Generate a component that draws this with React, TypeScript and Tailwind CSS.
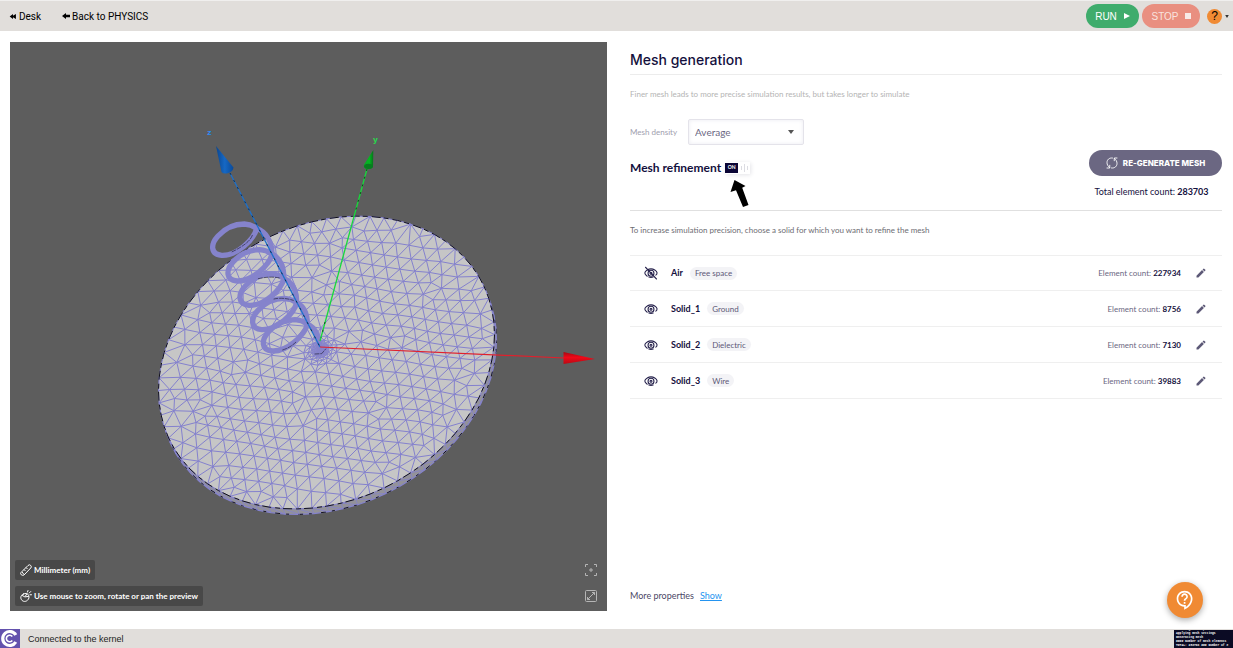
import React, { useState } from "react";
import { MdEdit, MdOutlineContactSupport } from "react-icons/md";

type Pt = [number, number];

/* ---------- mesh geometry ---------- */

function makeRandom(seed: number) {
  let s = seed;
  return () => {
    s = (s * 1664525 + 1013904223) % 4294967296;
    return s / 4294967296;
  };
}

const HUB: Pt = [-0.036, -0.09];
const RIM_COUNT = 72;
const HUB_RINGS: [number, number][] = [
  [0.01, 6], [0.022, 12], [0.036, 14], [0.052, 14], [0.072, 14], [0.1, 13],
];
const FIXED_COUNT = RIM_COUNT + HUB_RINGS.reduce((sum, [, n]) => sum + n, 0);

function diskPoints(): Pt[] {
  const rnd = makeRandom(11);
  const pts: Pt[] = [];
  for (let i = 0; i < RIM_COUNT; i++) {
    const a = (i / RIM_COUNT) * Math.PI * 2;
    pts.push([Math.cos(a), Math.sin(a)]);
  }
  HUB_RINGS.forEach(([r, n], k) => {
    for (let i = 0; i < n; i++) {
      const a = ((i + (k % 2) * 0.5 + rnd() * 0.3) / n) * Math.PI * 2;
      pts.push([HUB[0] + r * Math.cos(a), HUB[1] + r * Math.sin(a)]);
    }
  });
  const step = 0.088;
  const rowStep = step * 0.866;
  for (let j = -14; j <= 14; j++) {
    for (let i = -14; i <= 14; i++) {
      const gx = (i + (Math.abs(j) % 2) * 0.5) * step + (rnd() - 0.5) * 0.05;
      const gy = j * rowStep + (rnd() - 0.5) * 0.05;
      const x = gx * 0.94 - gy * 0.34;
      const y = gx * 0.34 + gy * 0.94;
      if (Math.hypot(x, y) > 0.945) continue;
      if (Math.hypot(x - HUB[0], y - HUB[1]) < 0.14) continue;
      pts.push([x, y]);
    }
  }
  return pts;
}

function triangulate(points: Pt[]): number[][] {
  const n = points.length;
  const all: Pt[] = [...points, [-30, -20], [30, -20], [0, 40]];
  type Tri = { v: number[]; cx: number; cy: number; r: number };
  const make = (a: number, b: number, c: number): Tri => {
    const [ax, ay] = all[a];
    const [bx, by] = all[b];
    const [cx, cy] = all[c];
    const d = 2 * (ax * (by - cy) + bx * (cy - ay) + cx * (ay - by)) || 1e-12;
    const a2 = ax * ax + ay * ay;
    const b2 = bx * bx + by * by;
    const c2 = cx * cx + cy * cy;
    const ux = (a2 * (by - cy) + b2 * (cy - ay) + c2 * (ay - by)) / d;
    const uy = (a2 * (cx - bx) + b2 * (ax - cx) + c2 * (bx - ax)) / d;
    return { v: [a, b, c], cx: ux, cy: uy, r: (ax - ux) ** 2 + (ay - uy) ** 2 };
  };
  let tris: Tri[] = [make(n, n + 1, n + 2)];
  for (let p = 0; p < n; p++) {
    const [x, y] = all[p];
    const edges = new Map<string, [number, number]>();
    const keep: Tri[] = [];
    for (const t of tris) {
      if ((x - t.cx) ** 2 + (y - t.cy) ** 2 < t.r - 1e-10) {
        for (let k = 0; k < 3; k++) {
          const a = t.v[k];
          const b = t.v[(k + 1) % 3];
          const key = a < b ? `${a}_${b}` : `${b}_${a}`;
          if (edges.has(key)) edges.delete(key);
          else edges.set(key, [a, b]);
        }
      } else keep.push(t);
    }
    edges.forEach(([a, b]) => keep.push(make(a, b, p)));
    tris = keep;
  }
  return tris.filter((t) => t.v.every((i) => i < n)).map((t) => t.v);
}

function neighbours(pts: Pt[]): Set<number>[] {
  const near: Set<number>[] = pts.map(() => new Set<number>());
  triangulate(pts).forEach(([a, b, c]) => {
    near[a].add(b).add(c);
    near[b].add(a).add(c);
    near[c].add(a).add(b);
  });
  return near;
}

const toView = ([x, y]: Pt): Pt => [326.5 + 168 * x, 362.5 - 28 * x + 143.7 * y];

function buildMesh(): string {
  let pts = diskPoints();
  for (let pass = 0; pass < 3; pass++) {
    const near = neighbours(pts);
    pts = pts.map((p, i): Pt => {
      if (i < FIXED_COUNT) return p;
      let sx = 0;
      let sy = 0;
      near[i].forEach((k) => {
        sx += pts[k][0];
        sy += pts[k][1];
      });
      const m = near[i].size || 1;
      return [p[0] * 0.5 + (sx / m) * 0.5, p[1] * 0.5 + (sy / m) * 0.5];
    });
  }
  let d = "";
  neighbours(pts).forEach((set, i) => {
    set.forEach((k) => {
      if (k > i) {
        const [x1, y1] = toView(pts[i]);
        const [x2, y2] = toView(pts[k]);
        d += `M${x1.toFixed(1)} ${y1.toFixed(1)}L${x2.toFixed(1)} ${y2.toFixed(1)}`;
      }
    });
  });
  return d;
}

const MESH = buildMesh();
const RIM = Array.from({ length: RIM_COUNT }, (_, i) => {
  const a = (i / RIM_COUNT) * Math.PI * 2;
  return toView([Math.cos(a), Math.sin(a)]);
});
const RIM_POINTS = RIM.map((p) => p.map((v) => v.toFixed(1)).join(",")).join(" ");
const LOWER_POINTS = RIM.map(([x, y]) => `${(x + 2).toFixed(1)},${(y + 5.5).toFixed(1)}`).join(" ");
const SIDE_EDGES = RIM.map(([x, y], i) => {
  const [nx, ny] = RIM[(i + 1) % RIM_COUNT];
  return `M${x} ${y}L${x + 2} ${y + 5.5}L${nx} ${ny}`;
}).join("");

const COILS: Pt[] = [[320, 325], [366, 402], [402, 475], [440, 548], [472, 612]];

function Scene() {
  return (
    <svg viewBox="10 42 597 569" className="block h-auto w-full" role="img" aria-label="3D mesh preview">
      <defs>
        <linearGradient id="blueCone" x1="0" x2="1"><stop offset="0" stopColor="#0b468f" /><stop offset=".5" stopColor="#1668c4" /><stop offset="1" stopColor="#0a4a99" /></linearGradient>
        <linearGradient id="greenCone" x1="0" x2="1"><stop offset="0" stopColor="#08ad27" /><stop offset=".6" stopColor="#05b521" /><stop offset="1" stopColor="#08721c" /></linearGradient>
        <linearGradient id="redCone" x1="0" x2="0" y1="0" y2="1"><stop offset="0" stopColor="#a50812" /><stop offset=".45" stopColor="#f00918" /><stop offset="1" stopColor="#b80a15" /></linearGradient>
      </defs>
      <polygon points={LOWER_POINTS} fill="#939299" stroke="#8583cc" strokeWidth="1.2" />
      <polygon points={LOWER_POINTS} fill="none" stroke="#16151c" strokeWidth="1" strokeDasharray="3 6 5 9" />
      <path d={SIDE_EDGES} stroke="#8583cc" strokeWidth=".8" fill="none" />
      <polygon points={RIM_POINTS} fill="#c6c6c6" />
      <path d={MESH} stroke="#8481ce" strokeWidth="1" fill="none" />
      <polygon points={RIM_POINTS} fill="none" stroke="#111116" strokeWidth="1" strokeDasharray="9 3 5 4" />
      <circle cx="320" cy="349" r="9" fill="#8583cc" opacity=".75" />
      <g transform="translate(150 120) scale(.33333)" fill="none" stroke="#8583cc" strokeLinejoin="round" strokeLinecap="round">
        {COILS.map(([x, y], i) => {
          const next = COILS[i + 1] ?? [508, 684];
          const dx = next[0] - x;
          const dy = next[1] - y;
          return (
            <path
              key={x}
              strokeWidth="16"
              d={`M${x} ${y}c-8 35 -61 83 -105 81c-34 -3 -34 -33 -11 -58c23 -25 54 -36 79 -36c20 1 37 13 37 13c${dx * 0.6} ${dy * 0.15} ${dx} ${dy * 0.5} ${dx} ${dy}`}
            />
          );
        })}
        <path d="M307 346q-8 24-62 50M325 476q35-8 65-2M372 537q25-6 58 4M398 690q24-8 40-24M495 702l20-1 12-14" stroke="#24233a" strokeWidth="2" strokeDasharray="12 5" />
      </g>
      <path d="M230 173L320 347" stroke="#1c70cc" strokeWidth="1.3" />
      <path d="M230 173L320 347" stroke="#0a1a30" strokeWidth=".8" strokeDasharray="2 6" />
      <path d="M367 169L320 341" stroke="#18d93c" strokeWidth="1.3" />
      <path d="M367 169L355 213M325 322L321 338" stroke="#0b2410" strokeWidth=".8" strokeDasharray="2 6" />
      <path d="M320 347L564 358" stroke="#e0202c" strokeWidth="1.2" />
      <path d="M216 146L233.5 167.500Q233 172 227 173.500Q223 174 221.500 172Z" fill="url(#blueCone)" />
      <path d="M373.300 150L373 167Q371 169.500 367 169.300Q363.500 168.500 363.800 165Z" fill="url(#greenCone)" />
      <ellipse cx="368.500" cy="166.300" rx="4.400" ry="2.600" fill="#087d1f" />
      <path d="M563.500 352L595 359L563.500 364Z" fill="url(#redCone)" />
      <text x="207" y="135" fill="#2b8cf5" fontSize="8" fontWeight="700" fontFamily="Liberation Mono, monospace">z</text>
      <text x="373" y="142" fill="#24e24b" fontSize="8" fontWeight="700" fontFamily="Liberation Mono, monospace">y</text>
    </svg>
  );
}

/* ---------- icons ---------- */

function Eye({ hidden = false }: { hidden?: boolean }) {
  return (
    <svg viewBox="-1 -1 26 26" className="size-3.5" fill="none" stroke="#27234d" strokeWidth="2" strokeLinecap="round">
      <path d="M5 18C-1 14-1 10 5 6.500c4-2.500 10-2.500 14 0c5 3 5.500 7 2 9.500M8 19.500q4 1.500 8 0" />
      <circle cx="12" cy="12.500" r="5.500" />
      <circle cx="12" cy="12.500" r="1.800" />
      {hidden && <path d="M2 1.500L22 23" strokeWidth="2.400" />}
    </svg>
  );
}

function SyncIcon() {
  return (
    <svg viewBox="0 0 24 24" className="size-3" fill="none" stroke="#fff" strokeWidth="1.800" strokeLinecap="round" strokeLinejoin="round">
      <path d="M13 2C6 1 2 6 2 11c0 4 1.500 7 5 10M2 22h5.500v-5.500M11 22c7 1 11-4 11-9c0-4-1.500-7-5-10M22 2h-5.500v5.500" />
    </svg>
  );
}

function RulerIcon() {
  return (
    <svg viewBox="0 0 24 24" className="size-3" fill="none" stroke="#fff" strokeWidth="2" strokeLinejoin="round">
      <path d="M2 17L16 3q3-3 5.500 0t0 5L8 22q-3 1.500-5.500-.5T2 17ZM8 11l3 3M12 7l3 3M4 16l4 5" />
    </svg>
  );
}

function MouseIcon() {
  return (
    <svg viewBox="0 0 24 24" className="size-3" fill="none" stroke="#fff" strokeWidth="2" strokeLinecap="round">
      <path d="M7 8C2 10 0 15 3 19.500s9 4 12 1s4-6 2-10S11 6 7 8ZM4 11q5 5 13 2M11 12l3-5M15 4l1-3M18.500 6l3-3M20 9.500h3" />
    </svg>
  );
}

/* ---------- page ---------- */

interface Solid {
  name: string;
  kind: string;
  count: number;
  hidden?: boolean;
}

const SOLIDS: Solid[] = [
  { name: "Air", kind: "Free space", count: 227934, hidden: true },
  { name: "Solid_1", kind: "Ground", count: 8756 },
  { name: "Solid_2", kind: "Dielectric", count: 7130 },
  { name: "Solid_3", kind: "Wire", count: 39883 },
];

function Header() {
  return (
    <header className="flex h-[31px] items-center border-t border-[#f0efee] bg-[#e1dedb] pr-1 pl-[9px] text-black">
      <a href="#desk" className="flex items-center gap-[2px] text-[10px] font-['Roboto',sans-serif]">
        <svg viewBox="0 0 8 6" className="h-[5px] w-2"><path d="M0 3L4 0V2L7.500 0V6L4 4V6Z" /></svg>
        Desk
      </a>
      <a href="#physics" className="ml-[21px] flex items-center gap-[2px] text-[10px] font-['Roboto',sans-serif]">
        <svg viewBox="0 0 8 6" className="h-1.5 w-2"><path d="M0 3L4 0V1.700H8V4.300H4V6Z" /></svg>
        Back to PHYSICS
      </a>
      <div className="ml-auto flex items-center font-['Liberation_Sans',sans-serif]">
        <button className="flex h-6 w-[53px] items-center justify-center gap-[7px] rounded-full bg-[#3fac6c] text-[10px] font-medium text-white">
          RUN
          <svg viewBox="0 0 6 6" className="size-1.5" fill="#fff"><path d="M0 0L6 3L0 6Z" /></svg>
        </button>
        <button className="ml-[3px] flex h-6 w-[58px] items-center justify-center gap-[6px] rounded-full bg-[#e98f80] text-[10px] text-[#f9e3df]">
          STOP
          <span className="size-1.5 bg-[#f7eae7]" />
        </button>
        <button aria-label="Help" className="ml-[7px] flex size-[15px] items-center justify-center rounded-full bg-[#f08a33] text-[12px] text-black">?</button>
        <svg viewBox="0 0 6 5" className="ml-[3px] h-[3px] w-1" fill="#333"><path d="M0 0H6L3 5Z" /></svg>
      </div>
    </header>
  );
}

function Viewer() {
  return (
    <section className="relative self-start bg-[#5d5d5d] text-white">
      <Scene />
      <div className="absolute bottom-[5px] left-[5px] flex flex-col items-start gap-1.5">
        <button className="flex h-5 items-center gap-[2px] rounded-[2px] bg-[#484848] px-[5px] text-[8px] font-bold">
          <RulerIcon />
          Millimeter (mm)
        </button>
        <p className="flex h-5 items-center gap-[2px] rounded-[2px] bg-[#484848] px-[5px] text-[8px] font-bold">
          <MouseIcon />
          Use mouse to zoom, rotate or pan the preview
        </p>
      </div>
      <div className="absolute right-2.5 bottom-[9px] flex flex-col gap-3.5">
        <button aria-label="Fit to view">
          <svg viewBox="0 0 12 12" className="block size-3" fill="none" stroke="#b5b5b5"><path d="M.5 3V.5H3M9 .5h2.500V3M11.500 9v2.500H9M3 11.500H.5V9M6 4v4M4 6h4" /></svg>
        </button>
        <button aria-label="Full screen">
          <svg viewBox="0 0 12 12" className="block size-3" fill="none" stroke="#b5b5b5"><rect x=".5" y=".5" width="11" height="11" rx="1" /><path d="M7 2.500h2.500V5M9.500 2.500L2.500 9.500M2.500 7v2.500H5" /></svg>
        </button>
      </div>
    </section>
  );
}

function MeshPanel() {
  const [refine, setRefine] = useState(true);
  return (
    <section className="flex flex-col text-[#14103d]">
      <h1 className="flex h-[33px] items-center border-b border-[#ececec] pt-[3px] text-[14px] leading-4 font-medium font-['Inter',sans-serif]">Mesh generation</h1>
      <p className="mt-[13px] text-[8px] leading-3 text-[#b4b4b4]">Finer mesh leads to more precise simulation results, but takes longer to simulate</p>
      <div className="mt-[19px] flex items-center">
        <label htmlFor="density" className="w-[58px] text-[8px] text-[#a09eae]">Mesh density</label>
        <div className="relative">
          <select id="density" defaultValue="Average" className="block h-[26px] w-[116px] appearance-none rounded-[2px] border border-[#e4e3ea] bg-white pl-1.5 text-[10px] text-[#6b6782] shadow-[inset_0_0_4px_#ececf2]">
            <option>Fine</option>
            <option>Average</option>
            <option>Coarse</option>
          </select>
          <svg viewBox="0 0 6 4" className="pointer-events-none absolute top-[11px] right-[10px] h-1 w-1.5" fill="#555"><path d="M0 0H6L3 4Z" /></svg>
        </div>
      </div>
      <div className="mt-[5px] flex h-[61px] justify-between border-b border-[#e0e0e0]">
        <div className="flex h-9 items-center gap-1">
          <h2 className="text-[12px] leading-4 font-bold">Mesh refinement</h2>
          <div className="relative">
            <button
              role="switch"
              aria-checked={refine}
              aria-label="Mesh refinement"
              onClick={() => setRefine(!refine)}
              className="flex h-3 items-center shadow-[1px_1px_4px_#e4e4e8]"
            >
              <span className="flex h-2.5 w-[13px] items-center justify-center bg-[#0b0535] text-[5px] font-bold text-white">{refine ? "ON" : "OFF"}</span>
              <svg viewBox="0 0 12 12" className="size-3 bg-white" stroke="#dcdce2"><path d="M3.500 4v4M6.500 2v8M9.500 4v4" /></svg>
            </button>
            <svg viewBox="0 0 20 30" className="pointer-events-none absolute top-[17px] left-[5px] h-[30px] w-5" fill="#000"><path d="M4.500 1L15.500 7L12.200 8.700L18.500 26L13 28L6 11.200L.5 13Z" /></svg>
          </div>
        </div>
        <div className="flex flex-col items-center">
          <button className="flex h-[26px] w-[133px] items-center justify-center gap-[5px] rounded-full bg-[#6b6782] text-[8px] font-extrabold text-white font-['Inter',sans-serif]">
            <SyncIcon />
            RE-GENERATE MESH
          </button>
          <p className="mt-[10px] pr-2 text-[9px] leading-3">Total element count: <b className="font-bold">283703</b></p>
        </div>
      </div>
      <p className="mt-[13px] text-[8px] leading-3 text-[#6c6c72]">To increase simulation precision, choose a solid for which you want to refine the mesh</p>
      <ul className="mt-[19px] border-t border-[#efefef]">
        {SOLIDS.map((s) => (
          <li key={s.name} className="flex h-9 items-center border-b border-[#efefef] pr-[15px] pl-3.5 first:h-[35px]">
            <button aria-label={`Toggle visibility of ${s.name}`} className="mr-[13px]"><Eye hidden={s.hidden} /></button>
            <span className="text-[9px] font-bold">{s.name}</span>
            <span className="ml-[7px] flex h-[13px] items-center rounded-full bg-[#f3f3f6] px-[5px] text-[8px] text-[#5d5977]">{s.kind}</span>
            <span className="ml-auto text-[8px] text-[#6b6782]">Element count: <b className="font-bold text-[#14103d]">{s.count}</b></span>
            <button aria-label={`Edit ${s.name}`} className="ml-3.5"><MdEdit className="size-3 text-[#5d5977]" /></button>
          </li>
        ))}
      </ul>
      <p className="mt-auto mb-[9px] flex gap-1.5 text-[9px] leading-3 text-[#4b4766]">
        More properties
        <a href="#more" className="text-[#2494f0] underline">Show</a>
      </p>
    </section>
  );
}

function Footer() {
  return (
    <footer className="flex h-[19px] items-center overflow-hidden bg-[#e1dedb] text-[#222]">
      <svg viewBox="0 0 20 19" className="h-[19px] w-5"><path fill="#6351ad" d="M0 0h20v19H0z" /><path d="M15.800 6A7 7 0 1 0 15.800 13" fill="none" stroke="#fff" strokeWidth="3.200" /><path d="M12.300 7.500A3.300 3.300 0 1 0 12.300 11.500" fill="none" stroke="#fff" strokeWidth="1.600" /></svg>
      <span className="ml-2 pt-[2px] text-[9px] font-['Liberation_Sans',sans-serif]">Connected to the kernel</span>
      <pre className="ml-auto flex h-[18px] w-[59px] flex-col justify-end self-end overflow-hidden bg-[#0b0b24] pl-0.5 text-[3px] leading-[4px] font-bold text-white font-['Liberation_Mono',monospace]">{`Creating free space
Applying mesh settings
Generating mesh
#### Number of mesh elements
TOTAL: 283703 ### Number of e`}</pre>
    </footer>
  );
}

export default function App() {
  return (
    <div className="flex min-h-screen flex-col bg-white font-['Lato',sans-serif]">
      <Header />
      <main className="grid flex-1 grid-cols-[597fr_592fr] gap-[23px] pt-[11px] pr-[11px] pb-[18px] pl-2.5">
        <Viewer />
        <MeshPanel />
      </main>
      <Footer />
      <button aria-label="Contact support" className="fixed right-[30px] bottom-[30px] flex size-9 items-center justify-center rounded-full bg-[#f08a33] text-white shadow-[0_2px_6px_#00000055]">
        <MdOutlineContactSupport className="size-5" />
      </button>
    </div>
  );
}
